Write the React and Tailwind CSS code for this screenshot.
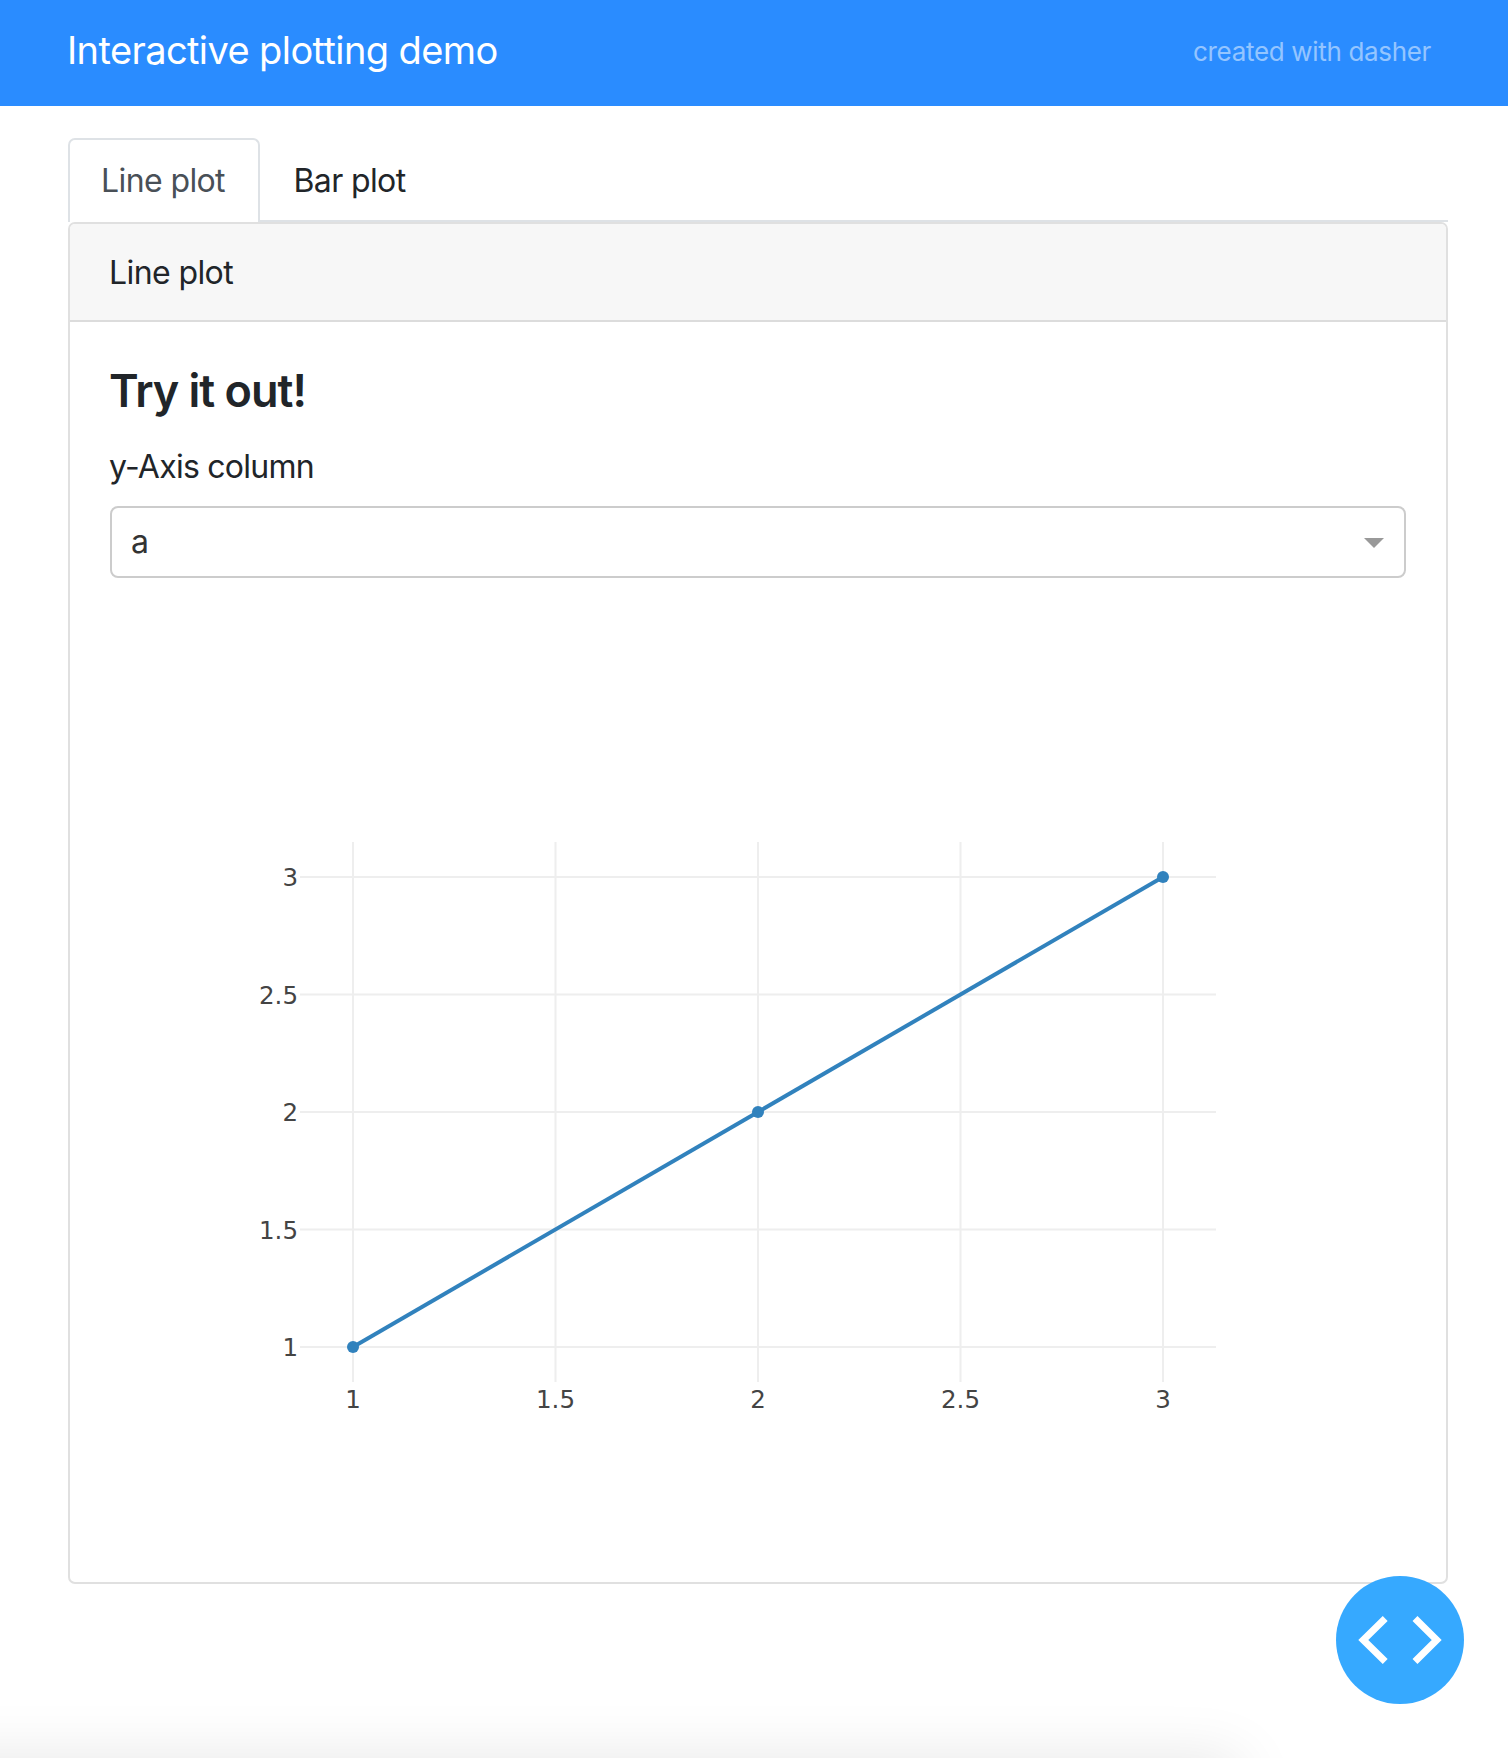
const xTicks = [
  { label: "1", x: 353 },
  { label: "1.5", x: 555.5 },
  { label: "2", x: 758 },
  { label: "2.5", x: 960.5 },
  { label: "3", x: 1163 },
];

const yTicks = [
  { label: "3", y: 877 },
  { label: "2.5", y: 994.5 },
  { label: "2", y: 1112 },
  { label: "1.5", y: 1229.5 },
  { label: "1", y: 1347 },
];

const points = [
  [353, 1347],
  [758, 1112],
  [1163, 877],
];

// viewBox is in page coordinates, makes it easy to read values off the screenshot
const LinePlot = () => (
  <svg viewBox="110 600 1296 900" className="mt-[22px] block h-[900px] w-full">
    {xTicks.map((t) => (
      <g key={t.label}>
        <line x1={t.x} x2={t.x} y1="842" y2="1382" stroke="#eeeeee" strokeWidth="2" />
        <text
          x={t.x}
          y="1408"
          textAnchor="middle"
          fill="#444444"
          fontSize="24.5"
          fontFamily="'DejaVu Sans', sans-serif"
        >
          {t.label}
        </text>
      </g>
    ))}
    {yTicks.map((t) => (
      <g key={t.label}>
        <line x1="300" x2="1216" y1={t.y} y2={t.y} stroke="#eeeeee" strokeWidth="2" />
        <text
          x="298"
          y={t.y + 9}
          textAnchor="end"
          fill="#444444"
          fontSize="24.5"
          fontFamily="'DejaVu Sans', sans-serif"
        >
          {t.label}
        </text>
      </g>
    ))}
    <polyline points={points.map((p) => p.join(",")).join(" ")} fill="none" stroke="#3182bd" strokeWidth="4" />
    {points.map((p) => (
      <circle key={p[0]} cx={p[0]} cy={p[1]} r="6" fill="#3182bd" />
    ))}
  </svg>
);

const App = () => {
  return (
    <div className="relative flex h-[1758px] flex-col overflow-hidden bg-white font-['Inter',sans-serif] text-[#212529]">
      {/* Header */}
      <header className="flex h-[106px] shrink-0 items-center justify-between bg-[#2a8cff] pb-[3px] pl-[67px] pr-[77px]">
        <h1 className="mb-[3px] text-[38px] leading-none tracking-[-0.6px] text-white">Interactive plotting demo</h1>
        <span className="text-[26px] tracking-[-0.33px] text-white/50">created with dasher</span>
      </header>

      <main className="flex-1 pl-[68px] pr-[60px] pt-[32px]">
        {/* Tabs */}
        <div className="flex h-[84px] border-b-[2px] border-[#dee2e6] text-[32px] tracking-[-0.6px]">
          <div className="-mb-[2px] flex w-[192px] items-center justify-center rounded-t-[7px] border-[2px] border-b-0 border-[#dee2e6] bg-white pr-[2px] text-[#495057]">
            Line plot
          </div>
          <div className="flex w-[180px] items-center justify-center pr-[1px] pt-[4px]">Bar plot</div>
        </div>

        {/* Card */}
        <section className="h-[1362px] rounded-[7px] border-[2px] border-[#e0e0e0]">
          <div className="flex h-[98px] items-center rounded-t-[5px] border-b-[2px] border-[#dcdcdc] bg-[#f7f7f7] px-[39px] pt-[2px] text-[32px] tracking-[-0.6px]">
            Line plot
          </div>
          <div className="px-[40px] pt-[46px]">
            <h4 className="-ml-[1px] text-[45px] font-semibold leading-none tracking-[-1px]">Try it out!</h4>
            <label className="-ml-[1px] mt-[38px] block text-[32px] leading-none tracking-[-0.75px]">y-Axis column</label>
            <div className="mt-[23px] flex h-[72px] items-center justify-between rounded-[8px] border-[2px] border-[#cccccc] pl-[19px] pr-[20px] text-[32px] text-[#333333]">
              <span>a</span>
              <svg width="20" height="10" viewBox="0 0 20 10" className="mt-[2px]">
                <polygon points="0,0 20,0 10,10" fill="#999999" />
              </svg>
            </div>
            <LinePlot />
          </div>
        </section>
      </main>

      {/* Floating code button */}
      <button className="absolute left-[1336px] top-[1576px] h-[128px] w-[128px] rounded-full bg-[#36a9ff]">
        <svg viewBox="0 0 128 128" className="h-full w-full">
          <polyline points="49.2,42.5 27.3,64 49.2,85.5" fill="none" stroke="#ffffff" strokeWidth="7" />
          <polyline points="79,42.5 100.7,64 79,85.5" fill="none" stroke="#ffffff" strokeWidth="7" />
        </svg>
      </button>

      {/* Soft shadow creeping up from below the fold */}
      <div className="absolute left-[-100px] top-full h-[60px] w-[1340px] shadow-[0_0_60px_rgba(0,0,0,0.1)]" />
    </div>
  );
};

export default App;
